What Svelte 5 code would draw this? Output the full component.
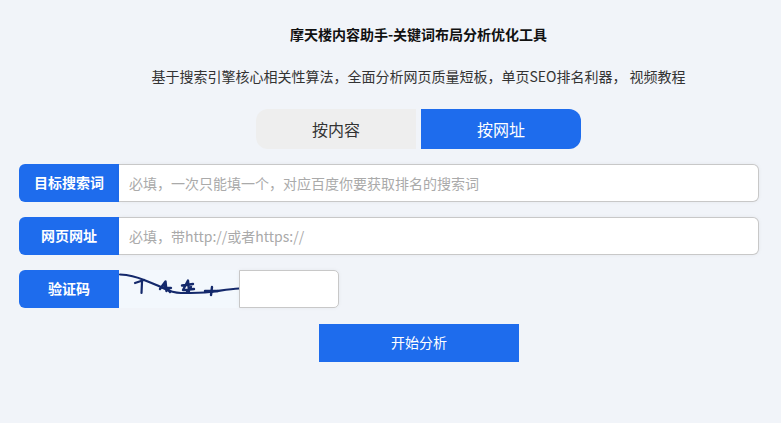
<script>
  let mode = $state('url');
  let keyword = $state('');
  let pageUrl = $state('');
  let code = $state('');
</script>

<div class="page">
  <div class="head">
    <h1>摩天楼内容助手-关键词布局分析优化工具</h1>
    <p>基于搜索引擎核心相关性算法，全面分析网页质量短板，单页SEO排名利器， 视频教程</p>
    <div class="tabs">
      <button class="tab first" class:active={mode === 'content'} onclick={() => (mode = 'content')}>按内容</button>
      <button class="tab last" class:active={mode === 'url'} onclick={() => (mode = 'url')}>按网址</button>
    </div>
  </div>

  <form class="form" onsubmit={(e) => e.preventDefault()}>
    <div class="row">
      <span class="label">目标搜索词</span>
      <input class="input" bind:value={keyword} placeholder="必填，一次只能填一个，对应百度你要获取排名的搜索词" />
    </div>
    <div class="row">
      <span class="label">网页网址</span>
      <input class="input" bind:value={pageUrl} placeholder="必填，带http://或者https://" />
    </div>
    <div class="row">
      <span class="label">验证码</span>
      <svg class="captcha" width="120" height="38" viewBox="0 0 120 38">
        <rect width="120" height="38" fill="#f3f8fd" />
        <g fill="none" stroke="#14296b" stroke-linecap="round" stroke-linejoin="round">
          <path d="M1 4.5 C 10 5 18 7 25 10 C 32 13 38 15 44 18 C 50 21 55 23 62 23 C 72 23 82 23 91 22 C 100 21 110 19 120 18.5" stroke-width="2.2" />
          <path d="M16 13 L 25 10 M23 12 L 22.5 23" stroke-width="2.2" />
          <path d="M41 19 L 46.5 11.5 L 47.5 21 M42 17 L 52 18 M45 14 L 51 22" stroke-width="2.4" />
          <path d="M64 20 L 69 10.5 L 70 21 M63 15.5 L 74 14 M65 20 L 75 19 M68 22 L 72 17" stroke-width="2.4" />
          <path d="M93 17 L 92 25 M86 21 L 99 21" stroke-width="2.4" />
        </g>
      </svg>
      <input class="input code" bind:value={code} />
    </div>
    <div class="submit">
      <button class="go" type="submit">开始分析</button>
    </div>
  </form>
</div>

<style>
  :global(body) {
    background: #f1f4f9;
    font-family: "Noto Sans CJK SC", "Liberation Sans", sans-serif;
  }

  .page {
    height: 423px;
    overflow: hidden;
  }

  .head {
    padding: 26px 0 0 56px;
    text-align: center;
  }

  h1 {
    margin: 0;
    font-size: 14px;
    line-height: 17px;
    font-weight: 700;
    color: #111;
  }

  p {
    margin: 24px 0 0;
    font-size: 14px;
    line-height: 19px;
    color: #333;
  }

  .tabs {
    display: flex;
    justify-content: center;
    gap: 5px;
    margin-top: 23px;
  }

  .tab {
    width: 160px;
    height: 40px;
    padding: 0;
    border: none;
    background: #eeeeee;
    color: #333;
    font-family: inherit;
    font-size: 16px;
    cursor: pointer;
  }

  .tab.first {
    border-radius: 12px 0 0 12px;
  }

  .tab.last {
    border-radius: 0 12px 12px 0;
  }

  .tab.active {
    background: #1e6ced;
    color: #fff;
  }

  .form {
    display: flex;
    flex-direction: column;
    gap: 15px;
    width: 740px;
    margin: 15px 0 0 19px;
  }

  .row {
    display: flex;
    height: 38px;
  }

  .label {
    flex: none;
    width: 100px;
    border-radius: 6px 0 0 6px;
    background: #1e6ced;
    color: #fff;
    font-size: 14px;
    font-weight: 700;
    line-height: 37px;
    text-align: center;
  }

  .input {
    flex: 1;
    min-width: 0;
    box-sizing: border-box;
    height: 38px;
    padding: 0 10px;
    border: 1px solid #c8c8c8;
    border-left: none;
    border-radius: 0 6px 6px 0;
    background: #fff;
    box-shadow: 0 0 4px rgba(0, 0, 0, 0.05);
    font-family: inherit;
    font-size: 14px;
    outline: none;
  }

  .input::placeholder {
    color: #aaa;
  }

  .captcha {
    flex: none;
    display: block;
  }

  .code {
    flex: none;
    width: 100px;
    border-left: 1px solid #c8c8c8;
    border-radius: 0 5px 5px 0;
  }

  .submit {
    display: flex;
    justify-content: center;
    margin-top: 1px;
    padding-left: 60px;
  }

  .go {
    width: 200px;
    height: 38px;
    padding: 0 0 3px;
    border: none;
    background: #1e6ced;
    color: #fff;
    font-family: inherit;
    font-size: 14px;
    cursor: pointer;
  }
</style>
